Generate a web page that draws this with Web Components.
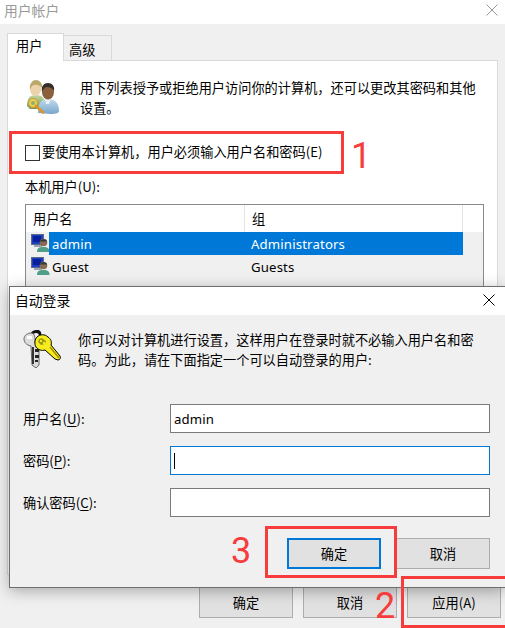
<!DOCTYPE html>
<html lang="zh-CN">
<head>
<meta charset="utf-8">
<title>用户帐户</title>
<style>
html, body { margin: 0; padding: 0; background: #f0f0f0; }
body { font-family: "Noto Sans", "Noto Sans CJK SC", sans-serif; font-size: 13.2px; color: #000; }
</style>
</head>
<body>
<ua-desktop>
    <ua-window title="用户帐户" dim>
        <ua-tabs active="用户" other="高级">
            <ua-account-panel></ua-account-panel>
        </ua-tabs>
        <div slot="footer">
            <ua-button>确定</ua-button>
            <ua-button>取消</ua-button>
            <ua-button>应用(A)</ua-button>
        </div>
    </ua-window>
    <ua-autologin slot="over"></ua-autologin>
    <ua-mark slot="over" box="9,131,335,43">1</ua-mark>
    <ua-mark slot="over" box="265,526,132,52">3</ua-mark>
    <ua-mark slot="over" box="401,576,110,52">2</ua-mark>
</ua-desktop>

<script>
const FONT = `"Noto Sans", "Noto Sans CJK SC", sans-serif`;
const CJK = `"Noto Sans CJK SC", "Noto Sans", sans-serif`;

const CLOSE_ICON = color => `<svg width="12" height="12" viewBox="0 0 12 12"><path d="M.5.5l11 11M11.5.5l-11 11" stroke="${color}" stroke-width="1" fill="none"/></svg>`;

// Small list icon: monitor with a user in front of it
const USER_ICON = `<svg width="19" height="19" viewBox="0 0 19 19">
    <rect x="0.5" y="0.5" width="12" height="10" fill="#1a3fc0" stroke="#5a6a8a"/>
    <rect x="2" y="2" width="8" height="6" fill="#0a1f9a"/>
    <rect x="3" y="11" width="8" height="2" fill="#9aa4b0"/>
    <path d="M6 18c0-4 2-5 6.500-5s6 1.500 6 5z" fill="#4f9f8a"/>
    <circle cx="12.500" cy="8.500" r="3.800" fill="#8a6a50"/>
    <path d="M9 7.500c.5-3 6.500-3 7 0z" fill="#2f3a3a"/>
</svg>`;

class UaDesktop extends HTMLElement {
    constructor() {
        super();
        this.attachShadow({ mode: 'open' }).innerHTML = `
            <style>
                :host { display: block; position: relative; width: 505px; height: 628px; overflow: hidden; }
            </style>
            <slot></slot>
            <slot name="over"></slot>`;
    }
}

class UaWindow extends HTMLElement {
    constructor() {
        super();
        this.attachShadow({ mode: 'open' }).innerHTML = `
            <style>
                :host { display: flex; flex-direction: column; height: 628px; background: #f0f0f0; font-family: ${CJK}; font-size: 13.2px; }
                .bar { height: 24px; flex: none; background: #fff; display: flex; align-items: center; justify-content: space-between; padding: 0 7px 0 4px; color: #9a9a9a; font-size: 13.8px; }
                .bar svg { display: block; margin-top: -4px; }
                .title { margin-top: -4px; }
                .body { flex: none; height: 551px; padding: 10px 7px 0; box-sizing: border-box; }
                ::slotted([slot=footer]) { display: flex; justify-content: flex-end; gap: 10px; padding: 0 4px 0 0; height: 31px; margin-top: 12px; }
            </style>
            <div class="bar"><span class="title"></span>${CLOSE_ICON('#9a9a9a')}</div>
            <div class="body"><slot></slot></div>
            <slot name="footer"></slot>`;
    }
    connectedCallback() {
        this.shadowRoot.querySelector('.title').textContent = this.getAttribute('title');
        this.removeAttribute('title');
    }
}

class UaTabs extends HTMLElement {
    constructor() {
        super();
        this.attachShadow({ mode: 'open' }).innerHTML = `
            <style>
                :host { display: flex; flex-direction: column; height: 100%; }
                .strip { display: flex; align-items: flex-end; height: 27px; flex: none; position: relative; z-index: 1; margin-bottom: -1px; }
                .tab { box-sizing: border-box; border: 1px solid #d9d9d9; border-bottom: 0; display: flex; align-items: center; }
                .on { width: 57px; height: 28px; background: #fff; padding: 0 0 4px 8px; }
                .off { width: 49px; height: 26px; background: #f0f0f0; margin-left: -1px; padding: 2px 0 0 5px; border-bottom: 1px solid #d9d9d9; }
                .panel { flex: 1; background: #fff; border: 1px solid #d9d9d9; box-sizing: border-box; }
            </style>
            <div class="strip"><div class="tab on" id="a"></div><div class="tab off" id="b"></div></div>
            <div class="panel"><slot></slot></div>`;
    }
    connectedCallback() {
        this.shadowRoot.getElementById('a').textContent = this.getAttribute('active');
        this.shadowRoot.getElementById('b').textContent = this.getAttribute('other');
    }
}

class UaAccountPanel extends HTMLElement {
    constructor() {
        super();
        this.attachShadow({ mode: 'open' }).innerHTML = `
            <style>
                :host { display: block; padding: 17px 0 0 17px; height: 100%; box-sizing: border-box; }
                .intro { display: flex; gap: 18px; height: 48px; }
                .intro p { margin: 0; width: 400px; line-height: 20px; }
                .check { display: flex; align-items: center; gap: 2px; height: 20px; margin-top: 15px; }
                .box { width: 13px; height: 14px; border: 1px solid #333; background: #fff; flex: none; margin-top: 3px; }
                .local { margin-top: 16px; height: 20px; line-height: 20px; }
            </style>
            <div class="intro">
                <ua-people-icon></ua-people-icon>
                <p>用下列表授予或拒绝用户访问你的计算机，还可以更改其密码和其他设置。</p>
            </div>
            <div class="check"><span class="box"></span><span>要使用本计算机，用户必须输入用户名和密码(E)</span></div>
            <div class="local">本机用户(U):</div>
            <ua-user-list></ua-user-list>`;
    }
}

class UaPeopleIcon extends HTMLElement {
    constructor() {
        super();
        this.attachShadow({ mode: 'open' }).innerHTML = `
            <style>:host { display: block; width: 36px; height: 36px; flex: none; margin: 1px 0 0 1px; }</style>
            <svg width="36" height="36" viewBox="0 0 36 36">
                <defs>
                    <linearGradient id="g" x1="0" y1="0" x2="0" y2="1"><stop offset="0" stop-color="#c4d6a0"/><stop offset="1" stop-color="#6f9a55"/></linearGradient>
                    <linearGradient id="b" x1="0" y1="0" x2="0" y2="1"><stop offset="0" stop-color="#c2dbee"/><stop offset="1" stop-color="#79a6ca"/></linearGradient>
                </defs>
                <path d="M1 27c0-8 3-11 9-11s9 3 9 11l-6 3H4z" fill="url(#g)"/>
                <ellipse cx="9.500" cy="10" rx="5.500" ry="7" fill="#ecd3ac"/>
                <path d="M4 11C3 4 7 1 10 1s7 3 6 8c-2-3-6-4-8-3-2 .5-3 2-4 5z" fill="#b9a868"/>
                <path d="M12 34c0-10 3-14 10-14s11 4 11 12c0 2-3 3-8 3z" fill="url(#b)"/>
                <path d="M19 20h6l-2 5h-3z" fill="#e8eef4"/>
                <ellipse cx="22" cy="13" rx="6" ry="7.500" fill="#8b5f3c"/>
                <path d="M16 13c-1-6 2-9 6-9s7 3 6 8c-2-3-4-4-7-4-2 0-4 2-5 5z" fill="#33302c"/>
                <circle cx="7" cy="24" r="4.500" fill="#e6cf5a" stroke="#d8962a"/>
                <circle cx="7" cy="24" r="2" fill="#8fb06a"/>
                <path d="M10 27l7 6.500" stroke="#e0951f" stroke-width="2.600" stroke-linecap="round"/>
            </svg>`;
    }
}

class UaKeysIcon extends HTMLElement {
    constructor() {
        super();
        this.attachShadow({ mode: 'open' }).innerHTML = `
            <style>:host { display: block; width: 38px; height: 38px; flex: none; }</style>
            <svg width="38" height="38" viewBox="0 0 38 38">
                <path d="M8 4c0-3 3-4 6-4s5 2 4 5l-2 1c0-2-1-3-3-3s-3 1-3 2z" fill="#111"/>
                <path d="M1 9c0-4 4-6 7-6s4 3 4 7v3l4 2v20l-3 3-4-3-1-19C3 15 1 12 1 9z" fill="#dcdcdc" stroke="#666"/>
                <rect x="4" y="6" width="5" height="3" fill="#fff"/>
                <path d="M9 17h2v17H9z" fill="#333"/>
                <path d="M12 19h4v3h-4zM12 25h4v3h-4zM12 30h3v2h-3z" fill="#222"/>
                <path d="M14 7c3-3 8-3 11 0 3 2 4 5 3 8l9 11c1 2 0 4-2 4l-3-1-10-9c-3 1-7 0-9-3-2-3-1-8 1-10z" fill="#f6ec1e" stroke="#000"/>
                <path d="M16 9l3-1 4 3-1 3-4 1-3-3z" fill="#9c9a18"/>
                <path d="M17 10h2v2h-2zM20 12h2v2h-2z" fill="#f6ec1e"/>
                <path d="M27 17l9 11" stroke="#a08e00" stroke-width="1.500"/>
            </svg>`;
    }
}

class UaUserList extends HTMLElement {
    constructor() {
        super();
        this.attachShadow({ mode: 'open' }).innerHTML = `
            <style>
                :host { display: block; margin: 7px 0 0 0; width: 459px; height: 120px; box-sizing: border-box; border: 1px solid #8a8a8a; background: #f0f0f0; font-family: ${FONT}; }
                .head { display: grid; grid-template-columns: 219px 218px 1fr; height: 27px; background: #fff; font-family: ${CJK}; }
                .head span { padding-left: 7px; line-height: 27px; border-right: 1px solid #e5e5e5; }
                .head span:last-child { border: 0; }
                .row { display: grid; grid-template-columns: 23px 195px 219px; height: 23px; align-items: center; }
                .row svg { display: block; margin-left: 5px; }
                .row .name, .row .group { height: 23px; line-height: 25px; padding-left: 3px; letter-spacing: .15px; }
                .row .group { padding-left: 7px; }
                .sel .name, .sel .group { background: #0078d7; color: #fff; }
            </style>
            <div class="head"><span>用户名</span><span>组</span><span></span></div>
            <div class="row sel">${USER_ICON}<div class="name">admin</div><div class="group">Administrators</div></div>
            <div class="row">${USER_ICON}<div class="name">Guest</div><div class="group">Guests</div></div>`;
    }
}

class UaButton extends HTMLElement {
    constructor() {
        super();
        this.attachShadow({ mode: 'open' }).innerHTML = `
            <style>
                :host { display: inline-flex; width: 94px; height: 31px; box-sizing: border-box; border: 1px solid #adadad; background: #e1e1e1; align-items: center; justify-content: center; font-family: ${CJK}; font-size: 13.2px; }
                :host([primary]) { border: 2px solid #0078d7; }
            </style>
            <slot></slot>`;
    }
}

class UaField extends HTMLElement {
    constructor() {
        super();
        this.attachShadow({ mode: 'open' }).innerHTML = `
            <style>
                :host { display: grid; grid-template-columns: 147px 320px; align-items: center; height: 29px; }
                .input { box-sizing: border-box; height: 29px; border: 1px solid #7a7a7a; background: #fff; padding-left: 3px; display: flex; align-items: center; font-family: ${FONT}; letter-spacing: .15px; }
                :host([focused]) .input { border-color: #0078d7; }
                .caret { width: 1px; height: 16px; background: #000; }
            </style>
            <span><slot></slot></span>
            <div class="input"></div>`;
    }
    connectedCallback() {
        const input = this.shadowRoot.querySelector('.input');
        input.textContent = this.getAttribute('value') || '';
        if (this.hasAttribute('focused')) input.innerHTML = '<span class="caret"></span>';
    }
}

class UaAutologin extends HTMLElement {
    constructor() {
        super();
        this.attachShadow({ mode: 'open' }).innerHTML = `
            <style>
                :host { position: absolute; left: 9px; top: 286px; width: 496px; height: 302px; box-sizing: border-box; border: 1px solid #6e6e6e; border-right: 0; background: #f0f0f0; box-shadow: 0 3px 14px rgba(0,0,0,.3); display: flex; flex-direction: column; font-family: ${CJK}; font-size: 13.2px; }
                .bar { height: 28px; flex: none; background: #fff; display: flex; align-items: center; justify-content: space-between; padding: 0 10px 2px 5px; box-sizing: border-box; font-size: 13.8px; }
                .body { padding: 15px 15px 0 13px; }
                .intro { display: flex; gap: 17px; height: 74px; }
                .intro p { margin: 0; width: 400px; line-height: 19.500px; }
                .fields { display: flex; flex-direction: column; gap: 13px; }
                .actions { display: flex; justify-content: flex-end; gap: 15px; margin-top: 21px; }
                u { text-underline-offset: 2px; }
            </style>
            <div class="bar"><span>自动登录</span>${CLOSE_ICON('#000')}</div>
            <div class="body">
                <div class="intro">
                    <ua-keys-icon></ua-keys-icon>
                    <p>你可以对计算机进行设置，这样用户在登录时就不必输入用户名和密码。为此，请在下面指定一个可以自动登录的用户:</p>
                </div>
                <div class="fields">
                    <ua-field value="admin">用户名(<u>U</u>):</ua-field>
                    <ua-field focused>密码(<u>P</u>):</ua-field>
                    <ua-field>确认密码(<u>C</u>):</ua-field>
                </div>
                <div class="actions"><ua-button primary>确定</ua-button><ua-button>取消</ua-button></div>
            </div>`;
    }
}

// Red annotation drawn over the screenshot: a box and its number
class UaMark extends HTMLElement {
    constructor() {
        super();
        this.attachShadow({ mode: 'open' }).innerHTML = `
            <style>
                :host { position: absolute; box-sizing: border-box; border: 3px solid #f73c3c; color: #f73c3c; font-family: Roboto, sans-serif; font-size: 36px; }
                span { position: absolute; line-height: 36px; }
            </style>
            <span><slot></slot></span>`;
    }
    connectedCallback() {
        const [x, y, w, h] = this.getAttribute('box').split(',').map(Number);
        Object.assign(this.style, { left: x + 'px', top: y + 'px', width: w + 'px', height: h + 'px' });
        const n = this.shadowRoot.querySelector('span');
        const place = { '1': [339, 4], '3': [-37, 4], '2': [-29, 9] }[this.textContent];
        n.style.left = place[0] + 'px';
        n.style.top = place[1] + 'px';
    }
}

customElements.define('ua-desktop', UaDesktop);
customElements.define('ua-window', UaWindow);
customElements.define('ua-tabs', UaTabs);
customElements.define('ua-people-icon', UaPeopleIcon);
customElements.define('ua-keys-icon', UaKeysIcon);
customElements.define('ua-user-list', UaUserList);
customElements.define('ua-account-panel', UaAccountPanel);
customElements.define('ua-button', UaButton);
customElements.define('ua-field', UaField);
customElements.define('ua-autologin', UaAutologin);
customElements.define('ua-mark', UaMark);
</script>
</body>
</html>
